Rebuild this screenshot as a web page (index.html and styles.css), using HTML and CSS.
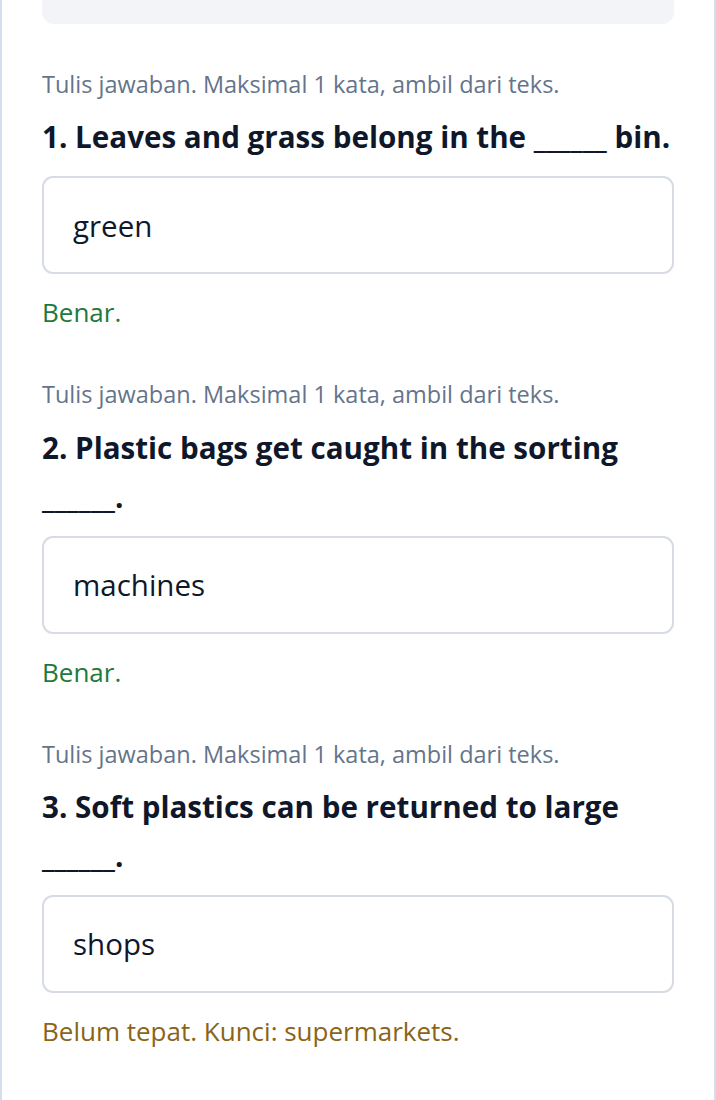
FILE: index.html
```html
<!DOCTYPE html>
<html lang="id">

<head>
  <meta charset="UTF-8">
  <meta name="viewport" content="width=device-width, initial-scale=1.0">
  <title>Latihan Membaca</title>
  <link rel="stylesheet" href="styles.css">
</head>

<body>
  <main class="card">
    <div class="passage"></div>

    <section class="question">
      <p class="hint">Tulis jawaban. Maksimal 1 kata, ambil dari teks.</p>
      <h3 class="prompt">1. Leaves and grass belong in the ______ bin.</h3>
      <input class="answer" type="text" value="green" readonly>
      <p class="feedback ok">Benar.</p>
    </section>

    <section class="question">
      <p class="hint">Tulis jawaban. Maksimal 1 kata, ambil dari teks.</p>
      <h3 class="prompt">2. Plastic bags get caught in the sorting ______.</h3>
      <input class="answer" type="text" value="machines" readonly>
      <p class="feedback ok">Benar.</p>
    </section>

    <section class="question">
      <p class="hint">Tulis jawaban. Maksimal 1 kata, ambil dari teks.</p>
      <h3 class="prompt">3. Soft plastics can be returned to large ______.</h3>
      <input class="answer" type="text" value="shops" readonly>
      <p class="feedback bad">Belum tepat. Kunci: supermarkets.</p>
    </section>
  </main>
</body>

</html>
```

FILE: styles.css
```css
*,
*::after,
*::before {
  box-sizing: border-box;
}

body {
  margin: 0;
  background-color: #fff;
  font-family: "Segoe UI", "Open Sans", "Noto Sans", sans-serif;
}

.card {
  min-height: 1100px;
  padding: 0 40px;
  border-left: 2px solid #d5deec;
  border-right: 2px solid #d5deec;
  background-color: #fff;
}

.passage {
  height: 24px;
  background-color: #f3f4f7;
  border-radius: 0 0 12px 12px;
}

.question {
  margin-top: 43px;
}

.question + .question {
  margin-top: 45px;
}

.hint {
  margin: 0 0 10px;
  font-size: 23.5px;
  line-height: 1.5;
  color: #64748b;
}

.prompt {
  margin: 0 0 15px;
  font-size: 29.6px;
  font-weight: 700;
  line-height: 49px;
  color: #0f172a;
}

.answer {
  display: block;
  width: 100%;
  height: 98px;
  padding: 0 29px;
  border: 2px solid #d6dbe4;
  border-radius: 11px;
  background-color: #fff;
  font-family: inherit;
  font-size: 29.5px;
  line-height: 1.5;
  color: #0f172a;
  outline: none;
}

.feedback {
  margin: 19px 0 0;
  font-size: 26px;
  line-height: 1.5;
}

.ok {
  color: #1d7a3c;
}

.bad {
  color: #8a6417;
}
```
